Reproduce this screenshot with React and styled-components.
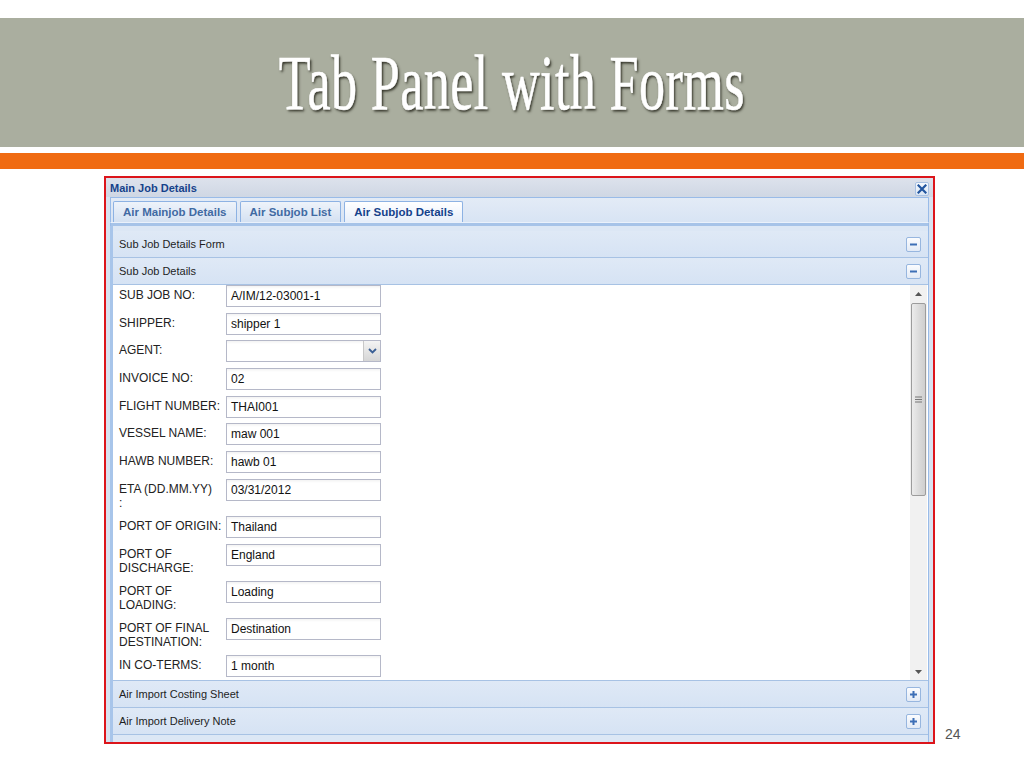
import React from "react";
import styled, { createGlobalStyle } from "styled-components";

const Global = createGlobalStyle`
  html, body { margin: 0; padding: 0; background: #ffffff; }
  body { font-family: "Liberation Sans", Arial, sans-serif; }
  * { box-sizing: border-box; }
`;

const Slide = styled.div`
  width: 1024px;
  height: 768px;
  display: flex;
  flex-direction: column;
  background: #fff;
  overflow: hidden;
`;

const TitleBand = styled.div`
  margin-top: 18px;
  height: 129px;
  background: #aaae9f;
  display: flex;
  align-items: center;
  justify-content: center;
`;

const Title = styled.h1`
  margin: 0;
  display: inline-block;
  font-family: "Liberation Serif", "Times New Roman", serif;
  font-weight: normal;
  font-size: 78px;
  line-height: 1;
  color: #ffffff;
  transform: scaleX(0.67);
  transform-origin: center;
  text-shadow: 2px 2px 3px rgba(30, 30, 20, 0.85);
  margin-top: 1px;
  letter-spacing: 0.5px;
  -webkit-text-stroke: 0.6px #ffffff;
`;

const OrangeBand = styled.div`
  margin-top: 6px;
  height: 16px;
  background: #f06b12;
`;

const Stage = styled.div`
  margin-top: 7px;
  padding-left: 104px;
  display: flex;
  align-items: flex-end;
`;

const Window = styled.div`
  width: 831px;
  height: 568px;
  border: 2px solid #dc151b;
  background: #d8e2f0;
  display: flex;
  flex-direction: column;
`;

const WinHeader = styled.div`
  height: 19px;
  display: flex;
  align-items: center;
  justify-content: space-between;
  padding: 0 4px 0 4px;
  background: linear-gradient(#dde2ec, #cfd7e4);
  font-weight: bold;
  font-size: 11px;
  color: #15428b;
`;

const CloseBtn = styled.div`
  width: 14px;
  height: 14px;
  border: 1px solid #a9c1e2;
  border-radius: 2px;
  background: linear-gradient(#f6f9fd, #dbe6f4);
  display: flex;
  align-items: center;
  justify-content: center;
  margin-top: 2px;
`;

const TabPanel = styled.div`
  margin: 0 4px;
  display: flex;
  flex-direction: column;
  flex: 1;
`;

const TabStrip = styled.div`
  height: 25px;
  border: 1px solid #99bbe8;
  border-bottom: none;
  background: linear-gradient(#e3ebf6, #d8e4f4);
  display: flex;
  align-items: flex-end;
  padding-left: 2px;
  gap: 3px;
`;

const Tab = styled.div`
  height: 21px;
  padding: 0 9px;
  display: flex;
  align-items: center;
  font-size: 11.5px;
  font-weight: bold;
  border: 1px solid #8db2e3;
  border-bottom: none;
  border-radius: 2px 2px 0 0;
  color: ${(p) => (p.$active ? "#15428b" : "#416aa3")};
  background: ${(p) =>
    p.$active
      ? "linear-gradient(#ffffff, #e6eefa)"
      : "linear-gradient(#eef3fa, #d4e1f2)"};
`;

const StripEdge = styled.div`
  height: 4px;
  border-top: 1px solid #eaf1fb;
  background: #a6c3e8;
  border-left: 1px solid #99bbe8;
  border-right: 1px solid #99bbe8;
`;

const TabBody = styled.div`
  flex: 1;
  border-left: 3px solid #a8c5ea;
  border-right: 1px solid #99bbe8;
  background: #dce7f5;
  padding: 5px 0 3px 0;
  display: flex;
  flex-direction: column;
`;

const AccHeader = styled.div`
  height: 27px;
  border-bottom: 1px solid #a7c2e4;
  background: linear-gradient(#dfe9f6, #d6e3f4);
  display: flex;
  align-items: center;
  justify-content: space-between;
  padding: 0 7px 0 6px;
  font-size: 11px;
  color: #1e1e1e;
`;

const ToolBtn = styled.div`
  width: 15px;
  height: 15px;
  border: 1px solid #97b6df;
  border-radius: 2px;
  background: linear-gradient(#fbfcfe, #e2eaf6);
  display: flex;
  align-items: center;
  justify-content: center;
`;

const FormArea = styled.div`
  height: 396px;
  background: #ffffff;
  display: flex;
  border-bottom: 1px solid #a7c2e4;
`;

const Fields = styled.div`
  flex: 1;
  padding: 0 0 0 6px;
`;

const Row = styled.div`
  display: flex;
  align-items: flex-start;
  margin-bottom: 5.7px;
`;

const Label = styled.div`
  width: 107px;
  padding-top: 3px;
  font-size: 12px;
  line-height: 14.2px;
  color: #222;
  white-space: nowrap;
`;

const Input = styled.div`
  width: 155px;
  height: 22px;
  border: 1px solid #b5b8c8;
  background: linear-gradient(#f3f3f3 0, #ffffff 3px);
  font-size: 12px;
  color: #111;
  display: flex;
  align-items: center;
  padding-left: 4px;
  position: relative;
`;

const Trigger = styled.div`
  position: absolute;
  right: 0;
  top: 0;
  width: 17px;
  height: 20px;
  background: linear-gradient(#f4f4f4, #d6d6d6);
  border-left: 1px solid #c8c8c8;
  display: flex;
  align-items: center;
  justify-content: center;
`;

const Scrollbar = styled.div`
  width: 17px;
  margin-right: 1px;
  background: #f1f1f1;
  display: flex;
  flex-direction: column;
  align-items: center;
`;

const ArrowBtn = styled.div`
  width: 17px;
  height: 17px;
  display: flex;
  align-items: center;
  justify-content: center;
`;

const Thumb = styled.div`
  width: 15px;
  height: 193px;
  margin-top: 1px;
  border: 1px solid #9c9c9c;
  border-radius: 2px;
  background: linear-gradient(90deg, #ececec, #d9d9d9 60%, #cfcfcf);
  display: flex;
  align-items: center;
  justify-content: center;
`;

const Spacer = styled.div`
  flex: 1;
`;

const PageNum = styled.div`
  margin-left: 10px;
  margin-bottom: 2px;
  font-size: 14px;
  color: #555;
  font-family: "Liberation Sans", Arial, sans-serif;
`;

const Minus = () => (
  <svg width="9" height="9" viewBox="0 0 9 9">
    <rect x="1" y="3.5" width="7" height="2" fill="#3d6fb6" />
  </svg>
);

const Plus = () => (
  <svg width="9" height="9" viewBox="0 0 9 9">
    <rect x="1" y="3.5" width="7" height="2" fill="#3d6fb6" />
    <rect x="3.5" y="1" width="2" height="7" fill="#3d6fb6" />
  </svg>
);

const fields = [
  ["SUB JOB NO:", "A/IM/12-03001-1"],
  ["SHIPPER:", "shipper 1"],
  ["AGENT:", "", true],
  ["INVOICE NO:", "02"],
  ["FLIGHT NUMBER:", "THAI001"],
  ["VESSEL NAME:", "maw 001"],
  ["HAWB NUMBER:", "hawb 01"],
  [["ETA (DD.MM.YY)", ":"], "03/31/2012"],
  ["PORT OF ORIGIN:", "Thailand"],
  [["PORT OF", "DISCHARGE:"], "England"],
  [["PORT OF", "LOADING:"], "Loading"],
  [["PORT OF FINAL", "DESTINATION:"], "Destination"],
  ["IN CO-TERMS:", "1 month"],
];

export default function App() {
  return (
    <>
      <Global />
      <Slide>
        <TitleBand>
          <Title>Tab Panel with Forms</Title>
        </TitleBand>
        <OrangeBand />
        <Stage>
          <Window>
            <WinHeader>
              <span>Main Job Details</span>
              <CloseBtn>
                <svg width="10" height="10" viewBox="0 0 10 10">
                  <path d="M1.5 1.5 L8.5 8.5 M8.5 1.5 L1.5 8.5" stroke="#23569f" strokeWidth="2.2" strokeLinecap="square" />
                </svg>
              </CloseBtn>
            </WinHeader>
            <TabPanel>
              <TabStrip>
                <Tab>Air Mainjob Details</Tab>
                <Tab>Air Subjob List</Tab>
                <Tab $active>Air Subjob Details</Tab>
              </TabStrip>
              <StripEdge />
              <TabBody>
                <AccHeader>
                  <span>Sub Job Details Form</span>
                  <ToolBtn><Minus /></ToolBtn>
                </AccHeader>
                <AccHeader>
                  <span>Sub Job Details</span>
                  <ToolBtn><Minus /></ToolBtn>
                </AccHeader>
                <FormArea>
                  <Fields>
                    {fields.map(([label, value, combo], i) => (
                      <Row key={i}>
                        <Label>
                          {Array.isArray(label)
                            ? label.map((l, j) => <div key={j}>{l}</div>)
                            : label}
                        </Label>
                        <Input>
                          {value}
                          {combo && (
                            <Trigger>
                              <svg width="9" height="6" viewBox="0 0 9 6">
                                <path d="M1 1 L4.5 4.5 L8 1" stroke="#3a5f95" strokeWidth="1.8" fill="none" />
                              </svg>
                            </Trigger>
                          )}
                        </Input>
                      </Row>
                    ))}
                  </Fields>
                  <Scrollbar>
                    <ArrowBtn>
                      <svg width="7" height="4" viewBox="0 0 7 4"><path d="M0 4 L3.5 0 L7 4 Z" fill="#555" /></svg>
                    </ArrowBtn>
                    <Thumb>
                      <svg width="7" height="7" viewBox="0 0 7 7">
                        <path d="M0 1 H7 M0 3.5 H7 M0 6 H7" stroke="#777" strokeWidth="1" />
                      </svg>
                    </Thumb>
                    <Spacer />
                    <ArrowBtn>
                      <svg width="7" height="4" viewBox="0 0 7 4"><path d="M0 0 L3.5 4 L7 0 Z" fill="#555" /></svg>
                    </ArrowBtn>
                  </Scrollbar>
                </FormArea>
                <AccHeader>
                  <span>Air Import Costing Sheet</span>
                  <ToolBtn><Plus /></ToolBtn>
                </AccHeader>
                <AccHeader>
                  <span>Air Import Delivery Note</span>
                  <ToolBtn><Plus /></ToolBtn>
                </AccHeader>
              </TabBody>
            </TabPanel>
          </Window>
          <PageNum>24</PageNum>
        </Stage>
      </Slide>
    </>
  );
}
